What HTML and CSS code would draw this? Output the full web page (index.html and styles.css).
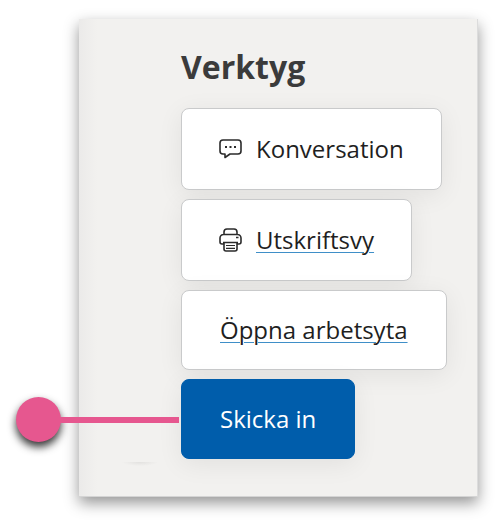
FILE: index.html
```html
<!DOCTYPE html>
<html lang="sv">
<head>
<meta charset="utf-8">
<meta name="viewport" content="width=device-width, initial-scale=1">
<title>Verktyg</title>
<link rel="stylesheet" href="styles.css">
</head>
<body>
<main class="panel">
  <h1 class="title">Verktyg</h1>
  <div class="tools">
    <button type="button" class="tool with-icon">
      <svg class="icon" viewBox="0 0 24 24" aria-hidden="true">
        <path d="M4 3h15a3 3 0 0 1 3 3v8a3 3 0 0 1-3 3h-8l-5 3.500V17H4a3 3 0 0 1-3-3V6a3 3 0 0 1 3-3z"/>
        <path class="dots" d="M6 9h2v2H6zM10.500 9h2v2h-2zM15 9h2v2h-2z"/>
      </svg>
      <span>Konversation</span>
    </button>
    <a href="#utskrift" class="tool with-icon">
      <svg class="icon" viewBox="0 0 24 24" aria-hidden="true">
        <path d="M5 6.500V4a3 3 0 0 1 3-3h7a3 3 0 0 1 3 3v2.500M5 16H3a2 2 0 0 1-2-2v-4a3.500 3.500 0 0 1 3.500-3.500h14a3.500 3.500 0 0 1 3.500 3.500v4a2 2 0 0 1-2 2h-2M17 9.500h2.500M4 14.500h15M5 14.500h13V21a2 2 0 0 1-2 2H7a2 2 0 0 1-2-2z"/>
        <path class="thin" d="M7 17.500h9M7 20.300h9"/>
      </svg>
      <span class="label">Utskriftsvy</span>
    </a>
    <a href="#arbetsyta" class="tool"><span class="label">Öppna arbetsyta</span></a>
    <div class="submit">
      <span class="callout" aria-hidden="true"></span>
      <button type="button" class="tool primary">Skicka in</button>
    </div>
  </div>
</main>
</body>
</html>
```
FILE: styles.css
```css
* {
  box-sizing: border-box;
}

body {
  margin: 0;
  padding: 19px 18px 24px 79px;
  background: #fff;
  color: #1f1f1f;
  font-family: "Open Sans", "Noto Sans", sans-serif;
}

.panel {
  padding: 24px 30px 37px 102px;
  background:
    radial-gradient(18px 4px at 61px 0, #e2e1df, transparent) 0 443px no-repeat,
    linear-gradient(90deg, #ebeae9, #f2f1ef 18px);
  border-right: 1px solid #dcdcdc;
  border-bottom: 1px solid #d4d4d4;
  box-shadow: 0 6px 14px rgba(0, 0, 0, 0.42);
}

.title {
  margin: 0 0 17px;
  color: #3b3b3b;
  font-size: 32px;
  font-weight: 700;
  line-height: 48px;
}

.tools {
  display: flex;
  flex-direction: column;
  align-items: flex-start;
  gap: 9px;
}

.tool {
  display: flex;
  align-items: center;
  gap: 13px;
  min-height: 80px;
  padding: 0 38px;
  border: 1px solid #c9cacb;
  border-radius: 8px;
  background: #fff;
  box-shadow: 0 5px 26px rgba(0, 0, 0, 0.07);
  color: inherit;
  font: inherit;
  font-size: 24px;
  line-height: 32px;
  text-decoration: none;
  white-space: nowrap;
}

.with-icon {
  min-height: 82px;
  padding: 0 37px;
}

.label {
  text-decoration: underline;
  text-decoration-color: #3f8fc8;
  text-decoration-thickness: 1px;
  text-underline-offset: 3px;
}

.icon {
  width: 24px;
  height: 24px;
  fill: none;
  stroke: #2b2b2b;
  stroke-width: 1.6;
  stroke-linejoin: round;
}

.icon .dots {
  fill: #2b2b2b;
  stroke: none;
}

.icon .thin {
  stroke-width: 1.2;
}

.submit {
  position: relative;
}

.primary {
  border-color: #005dab;
  background: #005dab;
  color: #fff;
}

/* Marker dot with a line that points at the submit button */
.callout {
  position: absolute;
  top: 50%;
  right: 100%;
  width: 163px;
  height: 45px;
  margin-top: -22px;
  margin-right: 2px;
}

.callout::before {
  content: "";
  position: absolute;
  top: 0;
  left: 0;
  width: 45px;
  height: 45px;
  border-radius: 50%;
  background: #e6578f;
  box-shadow: 0 5px 8px rgba(0, 0, 0, 0.8);
}

.callout::after {
  content: "";
  position: absolute;
  top: 20px;
  right: 0;
  left: 40px;
  height: 6px;
  background: #e6578f;
}
```
